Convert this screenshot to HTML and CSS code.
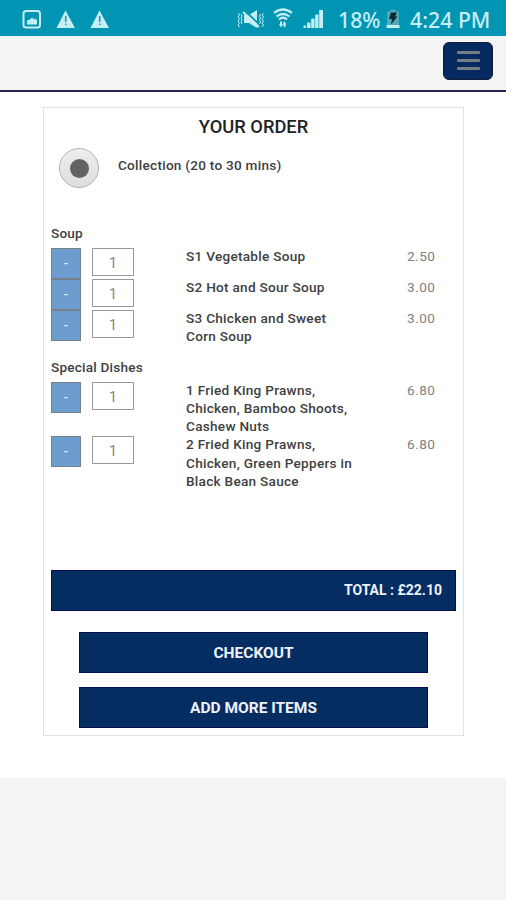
FILE: index.html
```
<!DOCTYPE html>
<html lang="en">
<head>
    <meta charset="UTF-8">
    <meta name="viewport" content="width=device-width, initial-scale=1.0">
    <title>Your Order</title>
    <link rel="stylesheet" href="styles.css">
</head>
<body>
    <div class="status-bar">
        <svg class="notices" width="90" height="36" viewBox="0 0 90 36">
            <rect x="2.500" y="11" width="16.500" height="16.500" rx="2.500" fill="none" stroke="#c5eef5" stroke-width="2"/>
            <path d="M6 24.500v-4l3-1 2-2 2 2 1.500-1 1.500 2v4z" fill="#c5eef5"/>
            <path d="M44.500 10.500L54 28H35.500z" fill="#c5eef5"/>
            <path d="M78.500 10.500L88 28H69.500z" fill="#c5eef5"/>
            <path d="M44.700 16v6M44.700 23.500v1.500M78.700 16v6M78.700 23.500v1.500" stroke="#2b97ab" stroke-width="1.600"/>
        </svg>
        <div class="status-right">
            <svg class="signals" width="90" height="36" viewBox="0 0 90 36">
                <path d="M7 15h5l8-5v18l-8-5H7z" fill="#c5eef5"/>
                <path d="M7 10l16 15" stroke="#0095b3" stroke-width="1.800"/>
                <path d="M6 12l16 15" stroke="#c5eef5" stroke-width="2"/>
                <path d="M1 13l1.500 2-1.500 2 1.500 2-1.500 2 1.500 2-1.500 2 1.500 2M4 14l1 2-1 2 1 2-1 2 1 2M23.500 14l-1 2 1 2-1 2 1 2-1 2M26.500 13l-1.500 2 1.500 2-1.500 2 1.500 2-1.500 2 1.500 2-1.500 2" fill="none" stroke="#c5eef5" stroke-width="1"/>
                <path d="M37 13q9-7 18 0M39.500 16.500q6.500-5 13 0M42 19.500q4-3.500 8 0" fill="none" stroke="#c5eef5" stroke-width="2.200"/>
                <path d="M44 21.500v4M47.500 23v4" stroke="#c5eef5" stroke-width="2"/>
                <path d="M42 24h4l-2 3.500zM45.500 24.500h4l-2-3.500z" fill="#c5eef5"/>
                <path d="M66.500 28v-2.500h2.500V28zM70 28v-5.500h3.500V28zM74.200 28v-9.500h3.300V28zM78.200 28v-13.500h3.300V28zM82.200 28V10h3.800v18z" fill="#c5eef5"/>
            </svg>
            <span class="battery-level">18%</span>
            <svg class="battery" width="14" height="36" viewBox="0 0 14 36">
                <path d="M4.500 9.500h5v2H13V25H1V11.500h3.500z" fill="#4fabbb"/>
                <path d="M0.500 25h13v3H0.500z" fill="#c5eef5"/>
                <path d="M5 12.500h6l-2 4h2.500L5 24.500l1-5.500H3z" fill="#0b2a31"/>
            </svg>
            <span class="clock">4:24 PM</span>
        </div>
    </div>

    <header class="header">
        <button type="button" class="menu-button" aria-label="Menu">
            <span class="menu-line"></span>
            <span class="menu-line"></span>
            <span class="menu-line"></span>
        </button>
    </header>

    <main class="content">
        <div class="order">
            <h1 class="order-title">YOUR ORDER</h1>
            <label class="delivery">
                <span class="radio"></span>
                <span class="delivery-text">Collection (20 to 30 mins)</span>
            </label>

            <div class="items">
                <h2 class="category">Soup</h2>
                <div class="item">
                    <button type="button" class="minus">-</button>
                    <div class="qty">1</div>
                    <div class="name">S1 Vegetable Soup</div>
                    <div class="price">2.50</div>
                </div>
                <div class="item">
                    <button type="button" class="minus">-</button>
                    <div class="qty">1</div>
                    <div class="name">S2 Hot and Sour Soup</div>
                    <div class="price">3.00</div>
                </div>
                <div class="item">
                    <button type="button" class="minus">-</button>
                    <div class="qty">1</div>
                    <div class="name">S3 Chicken and Sweet<br>Corn Soup</div>
                    <div class="price">3.00</div>
                </div>

                <h2 class="category">Special Dishes</h2>
                <div class="item">
                    <button type="button" class="minus">-</button>
                    <div class="qty">1</div>
                    <div class="name">1 Fried King Prawns,<br>Chicken, Bamboo Shoots,<br>Cashew Nuts</div>
                    <div class="price">6.80</div>
                </div>
                <div class="item">
                    <button type="button" class="minus">-</button>
                    <div class="qty">1</div>
                    <div class="name">2 Fried King Prawns,<br>Chicken, Green Peppers in<br>Black Bean Sauce</div>
                    <div class="price">6.80</div>
                </div>
            </div>

            <div class="total">TOTAL : £22.10</div>
            <button type="button" class="action">CHECKOUT</button>
            <button type="button" class="action">ADD MORE ITEMS</button>
        </div>
    </main>
</body>
</html>
```
FILE: styles.css
```
* {
    box-sizing: border-box;
}
body {
    margin: 0;
    min-height: 100vh;
    font-family: Roboto, sans-serif;
    background: #f4f4f4;
    color: #404040;
}
button {
    font-family: inherit;
    padding: 0;
}
.status-bar {
    display: flex;
    justify-content: space-between;
    height: 36px;
    padding: 0 16px 0 21px;
    background: #0095b3;
    color: #c5eef5;
    overflow: hidden;
}
.status-right {
    display: flex;
}
.battery-level, .clock {
    font-family: "Noto Sans", sans-serif;
    font-size: 21.3px;
    font-weight: 500;
    line-height: 39px;
    white-space: nowrap;
}
.battery-level {
    width: 45px;
    margin-left: 11px;
}
.battery {
    margin-left: 3px;
}
.clock {
    width: 80px;
    margin-left: 10px;
}
.header {
    display: flex;
    justify-content: flex-end;
    height: 56px;
    padding: 6px 13px 0 0;
    border-bottom: 2px solid #25254f;
}
.menu-button {
    display: flex;
    flex-direction: column;
    align-items: center;
    gap: 5px;
    width: 50px;
    height: 38px;
    padding-top: 8px;
    background: #052a62;
    border: 1px solid #101c38;
    border-radius: 6px;
}
.menu-line {
    width: 23px;
    height: 3px;
    background: #777c85;
    border-radius: 1px;
}
.content {
    height: 686px;
    padding: 15px 42px 0 43px;
    background: #fff;
}
.order {
    height: 629px;
    padding: 0 7px;
    border: 1px solid #dde4dc;
}
.order-title {
    margin: 8px 0 0;
    font-size: 18.3px;
    font-weight: 500;
    line-height: 22px;
    text-align: center;
    color: #222;
}
.delivery {
    display: flex;
    height: 40px;
    margin: 10px 0 0 8px;
}
.radio {
    display: flex;
    align-items: center;
    justify-content: center;
    width: 40px;
    height: 40px;
    border: 1px solid #b4b4b4;
    border-radius: 50%;
    background: linear-gradient(#eee, #ddd);
}
.radio::after {
    content: "";
    width: 19px;
    height: 19px;
    border-radius: 50%;
    background: #626262;
}
.delivery-text {
    margin-left: 19px;
    font-size: 13.6px;
    font-weight: 500;
    line-height: 34px;
    letter-spacing: 0.25px;
}
.items {
    height: 382px;
    padding-top: 36px;
}
.category {
    margin: 0;
    height: 24px;
    font-size: 13.6px;
    font-weight: 500;
    line-height: 18px;
    letter-spacing: 0.2px;
}
.item + .category {
    margin-top: 11px;
}
.item {
    display: grid;
    grid-template-columns: 30px 42px 221px auto;
    align-items: start;
    min-height: 31px;
}
.minus {
    height: 31px;
    border: 1px solid #777f88;
    background: #6d9dcf;
    color: #e4edf7;
    font-size: 13px;
    font-weight: 500;
}
.qty {
    width: 42px;
    height: 28px;
    margin-left: 11px;
    border: 1px solid #999;
    font-size: 15px;
    line-height: 28px;
    text-align: center;
    color: #888;
}
.name, .price {
    margin-top: -1px;
    padding: 0 0 1px 63px;
    font-size: 13.6px;
    line-height: 18.3px;
}
.name {
    font-weight: 500;
    letter-spacing: 0.27px;
    white-space: nowrap;
}
.price {
    letter-spacing: 0.5px;
    color: #808080;
}
.total {
    height: 41px;
    padding-right: 13px;
    background: #052d62;
    border: 1px solid #020f52;
    color: #eef1f7;
    font-size: 14px;
    font-weight: 700;
    line-height: 38px;
    text-align: right;
}
.action {
    display: block;
    width: 349px;
    height: 41px;
    margin: 21px 0 0 28px;
    background: #052d62;
    border: 1px solid #020f52;
    color: #eef1f7;
    font-size: 15.5px;
    font-weight: 700;
}
.action + .action {
    margin-top: 14px;
}
```
